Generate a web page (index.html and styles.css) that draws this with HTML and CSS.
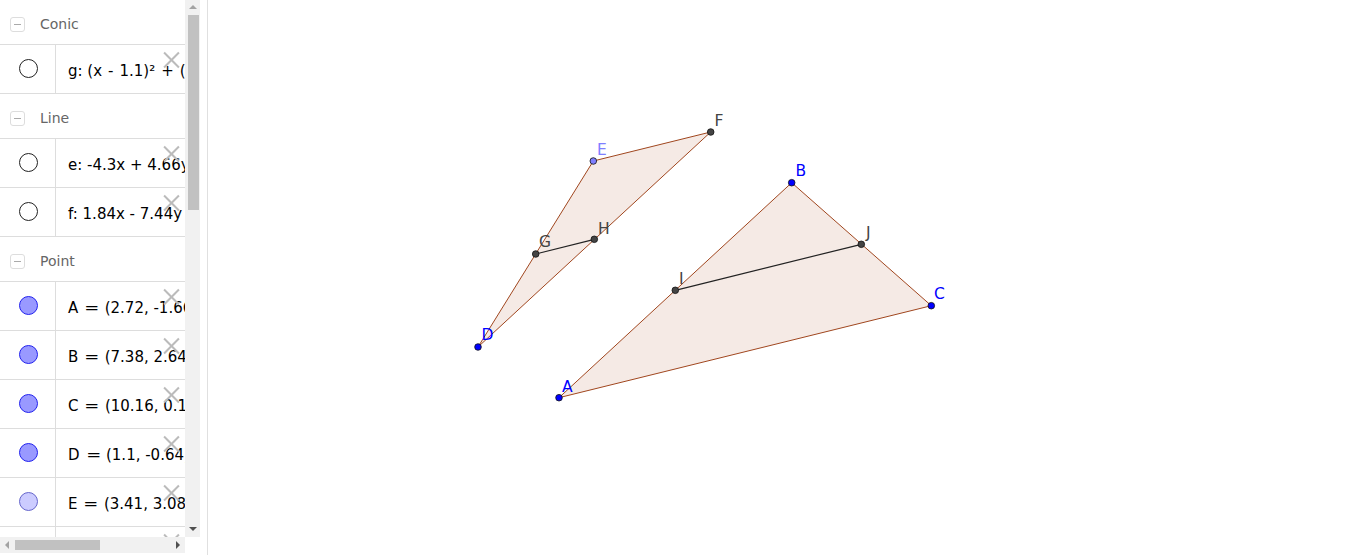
FILE: index.html
```html
<!DOCTYPE html>
<html>
<head>
<meta charset="utf-8">
<link rel="stylesheet" href="styles.css">
</head>
<body>
<div class="app">
  <div class="algebra">
    <div class="main-col">
      <div class="list">
        <div class="header"><span class="toggle"></span><span class="htext">Conic</span></div>
        <div class="row"><div class="icon"><span class="dot hollow"></span></div><div class="value">g: (x<span class="op">-</span>1.1)²<span class="op">+</span>(y<span class="op">+</span>0.64)²<span class="eq">=</span>20.05</div><span class="close"></span></div>
        <div class="header"><span class="toggle"></span><span class="htext">Line</span></div>
        <div class="row"><div class="icon"><span class="dot hollow"></span></div><div class="value">e: -4.3x + 4.66y<span class="eq">=</span>5.8</div><span class="close"></span></div>
        <div class="row"><div class="icon"><span class="dot hollow"></span></div><div class="value">f: 1.84x - 7.44y<span class="eq">=</span>6.79</div><span class="close"></span></div>
        <div class="header"><span class="toggle"></span><span class="htext">Point</span></div>
        <div class="row"><div class="icon"><span class="dot pt"></span></div><div class="value">A<span class="eq">=</span>(2.72, -1.66)</div><span class="close"></span></div>
        <div class="row"><div class="icon"><span class="dot pt"></span></div><div class="value">B<span class="eq">=</span>(7.38, 2.64)</div><span class="close"></span></div>
        <div class="row"><div class="icon"><span class="dot pt"></span></div><div class="value">C<span class="eq">=</span>(10.16, 0.11)</div><span class="close"></span></div>
        <div class="row"><div class="icon"><span class="dot pt"></span></div><div class="value">D<span class="eq">=</span>(1.1, -0.64)</div><span class="close"></span></div>
        <div class="row"><div class="icon"><span class="dot pt light"></span></div><div class="value">E<span class="eq">=</span>(3.41, 3.08)</div><span class="close"></span></div>
        <div class="row"><div class="icon"><span class="dot dark"></span></div><div class="value">F<span class="eq">=</span>(6.22, 3.69)</div><span class="close"></span></div>
      </div>
      <div class="hscroll">
        <span class="arrow-left"></span>
        <span class="hthumb"></span>
        <span class="hspacer"></span>
        <span class="arrow-right"></span>
      </div>
      <div class="bottom-pad"></div>
    </div>
    <div class="side-col">
      <div class="vscroll">
        <span class="arrow-up"></span>
        <span class="vthumb"></span>
        <span class="vspacer"></span>
        <span class="arrow-down"></span>
      </div>
      <div class="corner"></div>
    </div>
  </div>
  <div class="splitter"></div>
  <div class="canvas">
    <svg class="graphics" width="1158" height="555" viewBox="208 0 1158 555" xmlns="http://www.w3.org/2000/svg">
      <polygon points="478,347 593.3,161 710.7,132" fill="rgba(153,51,0,0.1)" stroke="#a0461e" stroke-width="1"/>
      <polygon points="559,397.7 791.7,182.7 931.3,305.7" fill="rgba(153,51,0,0.1)" stroke="#a0461e" stroke-width="1"/>
      <line x1="535.7" y1="254" x2="594.3" y2="239.3" stroke="#222" stroke-width="1.2"/>
      <line x1="675.3" y1="290.3" x2="861.3" y2="244.3" stroke="#222" stroke-width="1.2"/>
      <g stroke="#111" stroke-width="0.8">
        <circle cx="593.3" cy="161" r="3.3" fill="#7f7fff"/>
        <circle cx="710.7" cy="132" r="3.3" fill="#444"/>
        <circle cx="478" cy="347" r="3.3" fill="#0000ff"/>
        <circle cx="535.7" cy="254" r="3.3" fill="#444"/>
        <circle cx="594.3" cy="239.3" r="3.3" fill="#444"/>
        <circle cx="791.7" cy="182.7" r="3.3" fill="#0000ff"/>
        <circle cx="861.3" cy="244.3" r="3.3" fill="#444"/>
        <circle cx="931.3" cy="305.7" r="3.3" fill="#0000ff"/>
        <circle cx="559" cy="397.7" r="3.3" fill="#0000ff"/>
        <circle cx="675.3" cy="290.3" r="3.3" fill="#444"/>
      </g>
      <g class="labels">
        <text x="597" y="155" fill="#7f7fff">E</text>
        <text x="714.5" y="126" fill="#444">F</text>
        <text x="481.5" y="340" fill="#0000ff">D</text>
        <text x="539" y="247.3" fill="#444">G</text>
        <text x="598" y="234" fill="#444">H</text>
        <text x="679" y="284.3" fill="#444">I</text>
        <text x="795.5" y="176" fill="#0000ff">B</text>
        <text x="866" y="237.7" fill="#444">J</text>
        <text x="934" y="299.3" fill="#0000ff">C</text>
        <text x="562" y="392.3" fill="#0000ff">A</text>
      </g>
    </svg>
  </div>
</div>
</body>
</html>
```
FILE: styles.css
```css
html, body {
  margin: 0;
  padding: 0;
  background: #fff;
  overflow: hidden;
}
.app {
  display: flex;
  width: 1366px;
  height: 555px;
  font-family: "DejaVu Sans", sans-serif;
}
.algebra {
  display: flex;
  width: 200px;
  height: 555px;
  flex: none;
}
.main-col {
  display: flex;
  flex-direction: column;
  width: 185px;
}
.list {
  flex: 1;
  overflow: hidden;
  display: flex;
  flex-direction: column;
}
.header {
  flex: none;
  height: 45px;
  box-sizing: border-box;
  border-bottom: 1px solid #ddd;
  display: flex;
  align-items: center;
  padding-left: 10px;
  padding-top: 4px;
}
.toggle {
  width: 13px;
  height: 13px;
  border: 1px solid #ddd;
  border-radius: 3px;
  position: relative;
  flex: none;
}
.toggle::after {
  content: "";
  position: absolute;
  left: 3px;
  top: 6px;
  width: 7px;
  height: 1px;
  background: #aaa;
}
.htext {
  margin-left: 15px;
  font-size: 14px;
  color: #666;
}
.row {
  flex: none;
  position: relative;
  height: 49px;
  box-sizing: border-box;
  border-bottom: 1px solid #ddd;
  display: flex;
  width: 185px;
}
.icon {
  width: 56px;
  flex: none;
  border-right: 1px solid #ddd;
  box-sizing: border-box;
  display: flex;
  align-items: center;
  justify-content: center;
  padding-left: 1px;
  padding-bottom: 1px;
}
.dot {
  width: 17px;
  height: 17px;
  border-radius: 50%;
  border: 1px solid #222;
  box-sizing: content-box;
}
.dot.hollow {
  background: #fff;
}
.dot.pt {
  background: #9999ff;
  border-color: #2222ee;
}
.dot.pt.light {
  background: #ccccff;
  border-color: #6666cc;
}
.dot.dark {
  background: #444;
}
.value {
  flex: 1;
  white-space: nowrap;
  overflow: hidden;
  padding-left: 12px;
  padding-top: 16px;
  font-size: 15px;
  line-height: 20px;
  color: #000;
}
.eq {
  display: inline-block;
  margin: 0 6px 0 7px;
  font-size: 16px;
  transform: scaleX(1.12);
}
.op {
  display: inline-block;
  margin: 0 6px;
}
.close {
  position: absolute;
  left: 163px;
  top: 6px;
  width: 17px;
  height: 17px;
}
.close::before, .close::after {
  content: "";
  position: absolute;
  left: -2px;
  top: 7.5px;
  width: 21px;
  height: 2px;
  background: #bbb;
  transform: rotate(45deg);
}
.close::after {
  transform: rotate(-45deg);
}
.hscroll {
  flex: none;
  height: 16px;
  background: #f1f1f1;
  display: flex;
  align-items: center;
}
.arrow-left {
  width: 0;
  height: 0;
  border-top: 4px solid transparent;
  border-bottom: 4px solid transparent;
  border-right: 4px solid #a3a3a3;
  margin-left: 5px;
}
.hthumb {
  width: 85px;
  height: 10px;
  background: #c1c1c1;
  margin-left: 6px;
}
.hspacer {
  flex: 1;
}
.arrow-right {
  width: 0;
  height: 0;
  border-top: 4px solid transparent;
  border-bottom: 4px solid transparent;
  border-left: 4px solid #505050;
  margin-right: 5px;
}
.bottom-pad {
  height: 2px;
  flex: none;
}
.side-col {
  width: 15px;
  display: flex;
  flex-direction: column;
}
.vscroll {
  flex: 1;
  background: #f1f1f1;
  display: flex;
  flex-direction: column;
  align-items: center;
}
.arrow-up {
  width: 0;
  height: 0;
  border-left: 4px solid transparent;
  border-right: 4px solid transparent;
  border-bottom: 4px solid #a3a3a3;
  margin-top: 5px;
}
.vthumb {
  width: 11px;
  height: 195px;
  background: #c1c1c1;
  margin-top: 6px;
  margin-left: 1px;
}
.vspacer {
  flex: 1;
}
.arrow-down {
  width: 0;
  height: 0;
  border-left: 4px solid transparent;
  border-right: 4px solid transparent;
  border-top: 4px solid #505050;
  margin-bottom: 6px;
}
.corner {
  height: 18px;
  flex: none;
  background: #fff;
}
.splitter {
  width: 8px;
  flex: none;
  box-sizing: border-box;
  border-right: 1px solid #e0e0e0;
  background: #fff;
}
.canvas {
  flex: 1;
  overflow: hidden;
}
.graphics {
  display: block;
}
.labels text {
  font-family: "DejaVu Sans", sans-serif;
  font-size: 15.5px;
}
```
